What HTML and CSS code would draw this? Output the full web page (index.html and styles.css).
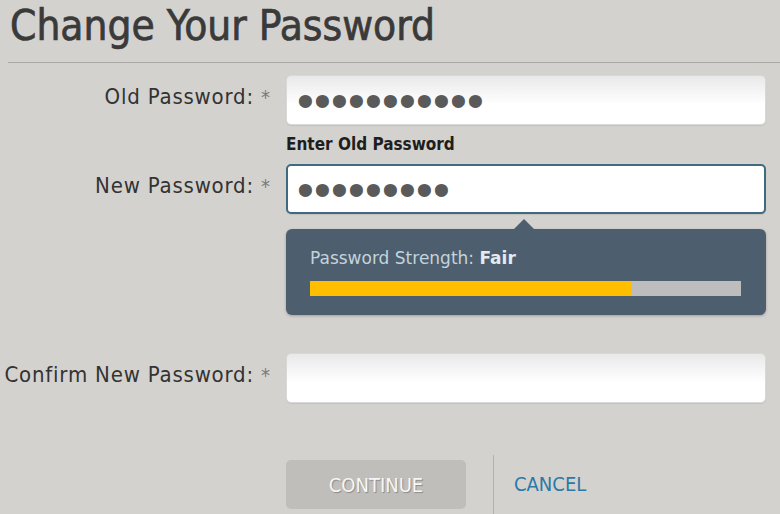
FILE: index.html
```html
<!DOCTYPE html>
<html lang="en">
<head>
    <meta charset="UTF-8">
    <meta name="viewport" content="width=device-width, initial-scale=1.0">
    <title>Change Your Password</title>
    <link rel="stylesheet" href="styles.css">
</head>
<body>
    <div class="page">
        <h1 class="title">Change Your Password</h1>
        <form class="pw-form" onsubmit="return false;">
            <div class="field">
                <label class="field-label" for="oldPassword">Old Password: <span class="req">*</span></label>
                <div class="field-body">
                    <input type="password" id="oldPassword" class="pw-input" value="oldpasswor1">
                    <div class="hint">Enter Old Password</div>
                </div>
            </div>
            <div class="field field-new">
                <label class="field-label" for="newPassword">New Password: <span class="req">*</span></label>
                <div class="field-body">
                    <input type="password" id="newPassword" class="pw-input pw-input-focus" value="newpass12">
                    <div class="strength">
                        <div class="strength-text">Password Strength: <strong>Fair</strong></div>
                        <div class="strength-bar">
                            <div class="strength-fill" style="width: 74.8%;"></div>
                        </div>
                    </div>
                </div>
            </div>
            <div class="field field-confirm">
                <label class="field-label" for="confirmPassword">Confirm New Password: <span class="req">*</span></label>
                <div class="field-body">
                    <input type="password" id="confirmPassword" class="pw-input" value="">
                </div>
            </div>
            <div class="actions">
                <button type="submit" class="btn-continue" disabled>CONTINUE</button>
                <div class="actions-divider"></div>
                <a href="#" class="link-cancel">CANCEL</a>
            </div>
        </form>
    </div>
</body>
</html>
```

FILE: styles.css
```css
html, body {
    margin: 0;
    padding: 0;
    background-color: #d4d2ce;
}
body {
    font-family: "DejaVu Sans Condensed", "DejaVu Sans", sans-serif;
    font-stretch: condensed;
    color: #333;
    overflow: hidden;
}
.title {
    margin: 0 0 0 8px;
    padding: 0 0 10px 2px;
    font-size: 42px;
    font-weight: normal;
    line-height: 52px;
    color: #3a3a3a;
    -webkit-text-stroke: 0.7px #3a3a3a;
    border-bottom: 1px solid #aaa8a4;
}
.field {
    display: flex;
    margin-top: 12px;
}
.field-new {
    margin-top: 10px;
}
.field-confirm {
    margin-top: 38px;
}
.field-label {
    width: 270px;
    padding-top: 9px;
    text-align: right;
    font-size: 22px;
    letter-spacing: 0.8px;
    line-height: 26px;
    color: #333;
    white-space: nowrap;
}
.req {
    color: #7a7a7a;
    font-size: 20px;
    letter-spacing: 0;
}
.field-body {
    width: 480px;
    margin-left: 16px;
}
.pw-input {
    display: block;
    box-sizing: border-box;
    width: 480px;
    height: 50px;
    margin: 0;
    padding: 0 12px 0 10px;
    border: 1px solid #d9d9d9;
    border-radius: 5px;
    background: linear-gradient(#e9e9e9, #ffffff 60%);
    box-shadow: 0 1px 1px rgba(0, 0, 0, 0.08);
    font-family: "Liberation Sans", sans-serif;
    font-size: 48px;
    letter-spacing: 0.2px;
    color: #5a5a5a;
    outline: none;
}
.pw-input-focus {
    border: 2px solid #3f6b80;
    background: #fff;
    padding-left: 9px;
}
.hint {
    margin-top: 9px;
    font-size: 17px;
    font-weight: bold;
    line-height: 20px;
    color: #1e1e1e;
}
.strength {
    position: relative;
    margin-top: 15px;
    padding: 18px 25px 19px 24px;
    background-color: #4d5f6e;
    border-radius: 6px;
    box-shadow: 0 1px 3px rgba(0, 0, 0, 0.25);
}
.strength::before {
    content: "";
    position: absolute;
    top: -10px;
    left: 228px;
    border-left: 10px solid transparent;
    border-right: 10px solid transparent;
    border-bottom: 10px solid #4d5f6e;
}
.strength-text {
    font-stretch: normal;
    font-family: "DejaVu Sans", sans-serif;
    font-size: 17px;
    line-height: 22px;
    color: #c4d3dc;
}
.strength-text strong {
    color: #e2ebf0;
}
.strength-bar {
    margin-top: 12px;
    height: 15px;
    background-color: #bdbdbd;
}
.strength-fill {
    height: 100%;
    background-color: #ffbf00;
}
.actions {
    display: flex;
    align-items: flex-start;
    margin: 52px 0 0 286px;
}
.btn-continue {
    width: 180px;
    height: 49px;
    margin-top: 5px;
    border: none;
    border-radius: 5px;
    background-color: #c0beba;
    font-family: "DejaVu Sans Condensed", "DejaVu Sans", sans-serif;
    font-stretch: condensed;
    font-size: 20px;
    color: #f6f6f6;
    text-shadow: 1px 1px 1px #8a8a8a;
}
.actions-divider {
    width: 1px;
    height: 70px;
    margin-left: 27px;
    background-color: #b3b1ad;
}
.link-cancel {
    margin: 17px 0 0 20px;
    font-size: 20px;
    line-height: 24px;
    color: #2b79a7;
    text-decoration: none;
}
```
